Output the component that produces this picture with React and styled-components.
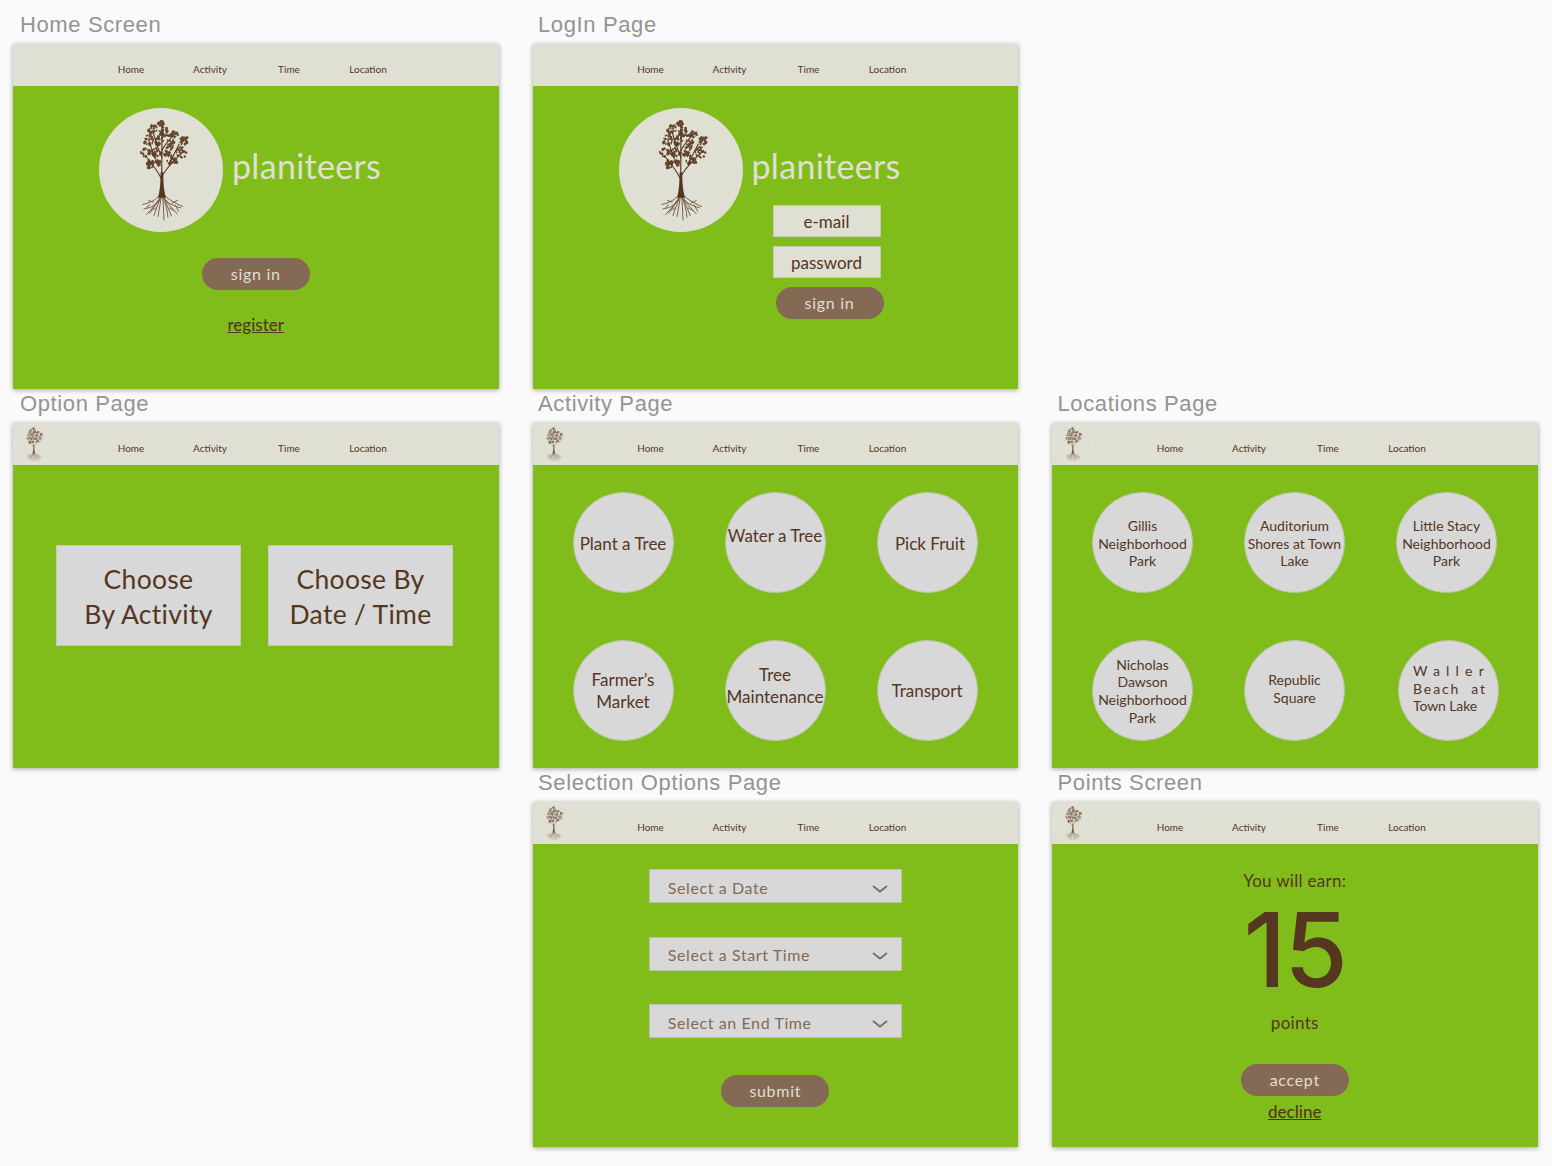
import React from "react";
import styled, { createGlobalStyle } from "styled-components";

const brown = "#55361f";
const mocha = "#846954";
const cream = "#e0dfd3";
const grey = "#d8d8d8";
const futura = `"Lato", "Open Sans", sans-serif`;

const GlobalStyle = createGlobalStyle`
  html, body {
    margin: 0;
    background: #fafafa;
  }
  * {
    box-sizing: border-box;
  }
`;

const Board = styled.div`
  display: grid;
  grid-template-columns: repeat(3, 485.5px);
  grid-auto-rows: 379px;
  column-gap: 34px;
  padding: 10px 0 0 13px;
  width: 1552px;
  height: 1166px;
  overflow: hidden;
`;

const Slot = styled.section`
  grid-column: ${(p) => p.$col};
  grid-row: ${(p) => p.$row};
`;

const SlotLabel = styled.h2`
  margin: 0;
  height: 34px;
  padding: 0 0 0 ${(p) => (p.$col === 1 ? 7 : 5.5)}px;
  font: 400 22px/30px "Liberation Sans", sans-serif;
  letter-spacing: 0.62px;
  color: #949494;
`;

const Frame = styled.div`
  width: 485.5px;
  height: 345px;
  display: flex;
  flex-direction: column;
  box-shadow: 0 1px 5px rgba(0, 0, 0, 0.35);
  font-family: ${futura};
`;

const NavBar = styled.nav`
  height: 42px;
  flex: none;
  display: grid;
  grid-template-columns: 78.5px repeat(4, 79px);
  background: ${cream};
`;

const NavLogo = styled.div`
  width: 40px;
  height: 40px;
  margin: 1px 0 0 1px;
  border-radius: 50%;
  border: 1px solid #e8e7dd;
  display: flex;
  align-items: center;
  justify-content: center;
  opacity: 0.75;
`;

const NavLink = styled.a`
  padding-top: 18px;
  text-align: center;
  font-size: 10px;
  line-height: 14px;
  color: ${brown};
`;

const Body = styled.div`
  flex: 1;
  background: #81bd1a;
  display: flex;
  flex-direction: column;
  align-items: ${(p) => p.$align || "center"};
  padding-top: ${(p) => p.$top || 0}px;
`;

const Hero = styled.div`
  align-self: flex-start;
  margin-left: 86px;
  display: flex;
  gap: 9px;
`;

const HeroBadge = styled.div`
  width: 124px;
  height: 124px;
  flex: none;
  border-radius: 50%;
  background: ${cream};
  display: flex;
  align-items: center;
  justify-content: center;
`;

const BrandColumn = styled.div`
  display: flex;
  flex-direction: column;
`;

const Brand = styled.h1`
  margin: 34px 0 0;
  font-size: 34px;
  line-height: 48px;
  font-weight: 400;
  letter-spacing: 0.3px;
  color: ${cream};
`;

const Pill = styled.button`
  width: 108px;
  height: 31.5px;
  border: 0;
  border-radius: 16px;
  background: ${mocha};
  font-family: ${futura};
  font-size: 16px;
  letter-spacing: 0.7px;
  color: ${cream};
  margin-top: ${(p) => p.$top || 0}px;
  margin-left: ${(p) => p.$left || 0}px;
  padding: 0 0 1px;
`;

const TextLink = styled.a`
  margin-top: ${(p) => p.$top}px;
  font-size: 17px;
  line-height: 22px;
  font-weight: 500;
  color: ${brown};
  text-decoration: underline;
`;

const Field = styled.div`
  width: 108px;
  height: 32px;
  margin: ${(p) => p.$top}px 0 0 21px;
  background: ${cream};
  border: 1px solid #c9c8b8;
  display: flex;
  align-items: center;
  justify-content: center;
  font-size: 17px;
  color: ${brown};
`;

const Choices = styled.div`
  display: flex;
  gap: 27px;
  margin-top: 80px;
  margin-left: 43px;
`;

const ChoiceCard = styled.div`
  width: 185px;
  height: 101px;
  padding-top: 2px;
  background: ${grey};
  border: 1px solid #c5c9b5;
  display: flex;
  align-items: center;
  justify-content: center;
  text-align: center;
  font-size: 26.5px;
  line-height: 35px;
  letter-spacing: 0.3px;
  color: ${brown};
`;

const BubbleGrid = styled.div`
  display: grid;
  grid-template-columns: repeat(3, 101px);
  grid-auto-rows: 101px;
  column-gap: 51px;
  row-gap: 47px;
  margin: 27px 0 0 40px;
`;

const Bubble = styled.div`
  width: 101px;
  height: 101px;
  border-radius: 50%;
  background: ${grey};
  border: 1px solid #bcc4a8;
  display: flex;
  flex-direction: column;
  align-items: center;
  justify-content: center;
  text-align: center;
  white-space: nowrap;
  font-size: ${(p) => p.$size}px;
  line-height: ${(p) => (p.$size === 14 ? "17.6px" : "22px")};
  color: ${brown};
  padding-top: ${(p) => p.$drop || 0}px;
  padding-bottom: ${(p) => p.$lift || 0}px;
  padding-left: ${(p) => p.$nudge || 0}px;
  margin-left: ${(p) => p.$shift || 0}px;
`;

const SpacedLine = styled.span`
  align-self: flex-start;
  margin-left: 14px;
  letter-spacing: ${(p) => p.$spacing}px;
`;

const Dropdown = styled.div`
  width: 253px;
  height: 34px;
  margin-top: ${(p) => p.$top}px;
  padding: 2px 13px 0 18px;
  background: ${grey};
  border: 1px solid #bcc4a8;
  display: flex;
  align-items: center;
  justify-content: space-between;
  font-size: 16px;
  letter-spacing: 0.6px;
  color: ${mocha};
  svg {
    margin-top: 3px;
  }
`;

const EarnLine = styled.div`
  font-size: 17px;
  line-height: 22px;
  letter-spacing: 0.3px;
  margin-top: ${(p) => p.$top || 0}px;
  color: ${brown};
`;

const Points = styled.div`
  font-family: "Inter", sans-serif;
  font-size: 103px;
  line-height: 90px;
  font-weight: 500;
  letter-spacing: -2px;
  margin-top: 13px;
  color: ${brown};
`;

// tiny seeded random so the foliage stays the same between renders
const makeRandom = (seed) => () => {
  seed = (seed * 16807) % 2147483647;
  return seed / 2147483647;
};

const clumps = [
  [213, 68, 9], [190, 88, 15], [222, 92, 15], [250, 105, 15], [176, 118, 15],
  [208, 122, 14], [240, 132, 15], [282, 120, 13], [166, 155, 14], [200, 155, 15],
  [274, 156, 17], [178, 190, 13], [205, 186, 9], [246, 180, 15], [232, 160, 10],
];

const leaves = [];
const rand = makeRandom(4217);
clumps.forEach(([cx, cy, r]) => {
  for (let i = 0; i < 17; i++) {
    const a = rand() * Math.PI * 2;
    const d = Math.sqrt(rand()) * r;
    leaves.push({
      cx: cx + Math.cos(a) * d,
      cy: cy + Math.sin(a) * d,
      rx: 3 + rand() * 3,
      ry: 2.2 + rand() * 2.2,
      rot: rand() * 180,
    });
  }
});

const branches = [
  "M215 270C215 230 216 180 216 80",
  "M213 232C205 215 190 195 170 170",
  "M219 222C232 200 250 180 284 150",
  "M216 170C208 150 198 130 190 95",
  "M216 150C225 130 235 120 250 105",
  "M190 192C180 190 176 188 170 186",
  "M238 190C245 175 250 165 268 130",
  "M196 175C190 160 184 140 176 120",
];

const roots = [
  "M214 275C205 295 185 305 158 312",
  "M216 275C230 295 250 305 278 318",
  "M214 280C205 305 190 320 170 342",
  "M217 280C228 305 245 322 262 340",
  "M215 280C212 305 208 325 204 348",
  "M217 280C220 305 221 330 222 358",
  "M210 295C200 312 185 322 162 325",
  "M222 295C235 310 250 315 272 322",
  "M205 300C195 318 182 330 180 338",
  "M226 300C232 318 238 330 244 346",
  "M212 290C205 310 198 325 192 345",
  "M220 290C226 310 232 325 234 350",
  "M190 305L176 300",
  "M178 312L170 322",
  "M246 308L262 300",
  "M256 314L266 332",
  "M198 322L188 328",
  "M238 322L252 330",
];

const Tree = ({ width }) => (
  <svg width={width * 1.133} height={width * 2.03} viewBox="129 55 170 305" fill="none">
    <g fill="#664730">
      {leaves.map((l, i) => (
        <ellipse
          key={i}
          cx={l.cx}
          cy={l.cy}
          rx={l.rx}
          ry={l.ry}
          transform={`rotate(${l.rot} ${l.cx} ${l.cy})`}
        />
      ))}
    </g>
    <path d="M204 292C212 262 211 240 212 215L220 215C220 240 220 262 228 292Z" fill={brown} />
    <g stroke={brown} strokeWidth="3.4" strokeLinecap="round">
      {branches.map((d) => (
        <path key={d} d={d} />
      ))}
    </g>
    <g stroke={brown} strokeWidth="2.6" strokeLinecap="round" opacity="0.85">
      {roots.map((d) => (
        <path key={d} d={d} />
      ))}
    </g>
  </svg>
);

const Chevron = () => (
  <svg width="16" height="8" viewBox="0 0 16 8" fill="none">
    <path d="M1 1L8 6.5L15 1" stroke={mocha} strokeWidth="1.8" />
  </svg>
);

const Nav = ({ logo }) => (
  <NavBar>
    <div>
      {logo && (
        <NavLogo>
          <Tree width={17} />
        </NavLogo>
      )}
    </div>
    <NavLink>Home</NavLink>
    <NavLink>Activity</NavLink>
    <NavLink>Time</NavLink>
    <NavLink>Location</NavLink>
  </NavBar>
);

const Screen = ({ title, col, row, logo, children }) => (
  <Slot $col={col} $row={row}>
    <SlotLabel $col={col}>{title}</SlotLabel>
    <Frame>
      <Nav logo={logo} />
      {children}
    </Frame>
  </Slot>
);

const activities = [
  { text: ["Plant a Tree"], drop: 3 },
  { text: ["Water a Tree"], lift: 14 },
  { text: ["Pick Fruit"], nudge: 6, drop: 3 },
  { text: ["Farmer’s", "Market"] },
  { text: ["Tree", "Maintenance"], lift: 10 },
  { text: ["Transport"] },
];

const locations = [
  { text: ["Gillis", "Neighborhood", "Park"], drop: 2 },
  { text: ["Auditorium", "Shores at Town", "Lake"], drop: 2 },
  { text: ["Little Stacy", "Neighborhood", "Park"], drop: 2 },
  { text: ["Nicholas", "Dawson", "Neighborhood", "Park"], drop: 1 },
  { text: ["Republic", "Square"], lift: 4 },
];

export default function App() {
  return (
    <>
      <GlobalStyle />
      <Board>
        <Screen title="Home Screen" col={1} row={1}>
          <Body $top={22}>
            <Hero>
              <HeroBadge>
                <Tree width={50} />
              </HeroBadge>
              <BrandColumn>
                <Brand>planiteers</Brand>
              </BrandColumn>
            </Hero>
            <Pill $top={26}>sign in</Pill>
            <TextLink $top={24}>register</TextLink>
          </Body>
        </Screen>

        <Screen title="LogIn Page" col={2} row={1}>
          <Body $top={22}>
            <Hero>
              <HeroBadge>
                <Tree width={50} />
              </HeroBadge>
              <BrandColumn>
                <Brand>planiteers</Brand>
                <Field $top={15}>e-mail</Field>
                <Field $top={9}>password</Field>
                <Pill $top={9} $left={24}>
                  sign in
                </Pill>
              </BrandColumn>
            </Hero>
          </Body>
        </Screen>

        <Screen title="Option Page" col={1} row={2} logo>
          <Body $align="flex-start">
            <Choices>
              <ChoiceCard>
                Choose
                <br />
                By Activity
              </ChoiceCard>
              <ChoiceCard>
                Choose By
                <br />
                Date / Time
              </ChoiceCard>
            </Choices>
          </Body>
        </Screen>

        <Screen title="Activity Page" col={2} row={2} logo>
          <Body $align="flex-start">
            <BubbleGrid>
              {activities.map((a) => (
                <Bubble key={a.text[0]} $size={17} $lift={a.lift} $nudge={a.nudge} $drop={a.drop}>
                  {a.text.map((line) => (
                    <span key={line}>{line}</span>
                  ))}
                </Bubble>
              ))}
            </BubbleGrid>
          </Body>
        </Screen>

        <Screen title="Locations Page" col={3} row={2} logo>
          <Body $align="flex-start">
            <BubbleGrid>
              {locations.map((l) => (
                <Bubble key={l.text[0]} $size={14} $drop={l.drop} $lift={l.lift}>
                  {l.text.map((line) => (
                    <span key={line}>{line}</span>
                  ))}
                </Bubble>
              ))}
              <Bubble $size={14} $shift={2} $lift={4}>
                <SpacedLine $spacing={6.2}>Waller</SpacedLine>
                <SpacedLine $spacing={1.9}>Beach&nbsp;&nbsp;at</SpacedLine>
                <SpacedLine $spacing={-0.1}>Town Lake</SpacedLine>
              </Bubble>
            </BubbleGrid>
          </Body>
        </Screen>

        <Screen title="Selection Options Page" col={2} row={3} logo>
          <Body $top={25}>
            <Dropdown $top={0}>
              Select a Date
              <Chevron />
            </Dropdown>
            <Dropdown $top={33.5}>
              Select a Start Time
              <Chevron />
            </Dropdown>
            <Dropdown $top={33.5}>
              Select an End Time
              <Chevron />
            </Dropdown>
            <Pill $top={37}>submit</Pill>
          </Body>
        </Screen>

        <Screen title="Points Screen" col={3} row={3} logo>
          <Body $top={26}>
            <EarnLine>You will earn:</EarnLine>
            <Points>15</Points>
            <EarnLine $top={17}>points</EarnLine>
            <Pill $top={30}>accept</Pill>
            <TextLink $top={5.5}>decline</TextLink>
          </Body>
        </Screen>
      </Board>
    </>
  );
}
